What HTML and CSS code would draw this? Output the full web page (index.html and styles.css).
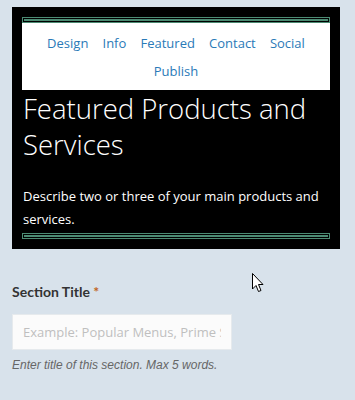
FILE: index.html
```html
<!DOCTYPE html>
<html lang="en">
<head>
    <meta charset="UTF-8">
    <title>Section Editor</title>
    <link rel="stylesheet" href="styles.css">
</head>
<body>
    <div class="preview">
        <div class="rule"></div>
        <nav class="menu">
            <a href="#">Design</a>
            <a href="#">Info</a>
            <a href="#">Featured</a>
            <a href="#">Contact</a>
            <a href="#">Social</a>
            <a href="#">Publish</a>
        </nav>
        <h1 class="preview-title">Featured Products and Services</h1>
        <p class="preview-text">Describe two or three of your main products and services.</p>
        <div class="rule rule-bottom"></div>
    </div>

    <div class="field">
        <label class="field-label" for="sectionTitle">Section Title <span class="req">*</span></label>
        <input type="text" id="sectionTitle" class="field-input" placeholder="Example: Popular Menus, Prime Services">
        <p class="field-help">Enter title of this section. Max 5 words.</p>
    </div>

    <svg class="cursor" width="12" height="20" viewBox="0 0 12 20">
        <path d="M0.5 0.5 L0.5 16 L4 12.5 L6.5 18.5 L9 17.5 L6.5 11.5 L11 11.5 Z" fill="#fff" stroke="#000" stroke-width="1"/>
    </svg>
</body>
</html>
```

FILE: styles.css
```css
* {
    margin: 0;
    padding: 0;
    box-sizing: border-box;
}
body {
    background: #d8e2eb;
    padding: 7px 15px 0 12px;
    font-family: "Open Sans", sans-serif;
    position: relative;
    min-height: 400px;
}
.preview {
    background: #000;
    padding: 10px;
}
.rule {
    height: 6px;
    background: #4c8b73;
    border: 1px solid #4c8b73;
    box-shadow: inset 0 0 0 1px #000;
}
.rule-bottom {
    margin-top: 2px;
}
.menu {
    background: #fff;
    text-align: center;
    padding: 6px 10px 5px;
    line-height: 27px;
}
.menu a {
    color: #2a7ab8;
    text-decoration: none;
    font-size: 13px;
    margin: 0 5px;
}
.preview-title {
    color: #fff;
    font-weight: 300;
    font-size: 27.5px;
    line-height: 36px;
    margin: 1px 0 0 1px;
}
.preview-text {
    color: #fff;
    font-size: 13px;
    line-height: 23px;
    margin: 22px 0 0 1px;
}
.field {
    padding-top: 34px;
}
.field-label {
    display: block;
    font-family: Lato, sans-serif;
    font-weight: bold;
    font-size: 14px;
    line-height: 18px;
    color: #333;
}
.req {
    color: #c0651f;
}
.field-input {
    display: block;
    margin-top: 13px;
    width: 220px;
    height: 36px;
    padding: 0 10px;
    background: #fbfbfb;
    border: 1px solid #e6eaed;
    font-family: "Open Sans", sans-serif;
    font-size: 13px;
    outline: none;
}
.field-input::placeholder {
    color: #bfbfbf;
}
.field-help {
    margin-top: 8px;
    font-family: "Liberation Sans", Arial, sans-serif;
    font-style: italic;
    font-size: 12px;
    line-height: 14px;
    color: #666;
}
.cursor {
    position: absolute;
    left: 252px;
    top: 273px;
}
```
